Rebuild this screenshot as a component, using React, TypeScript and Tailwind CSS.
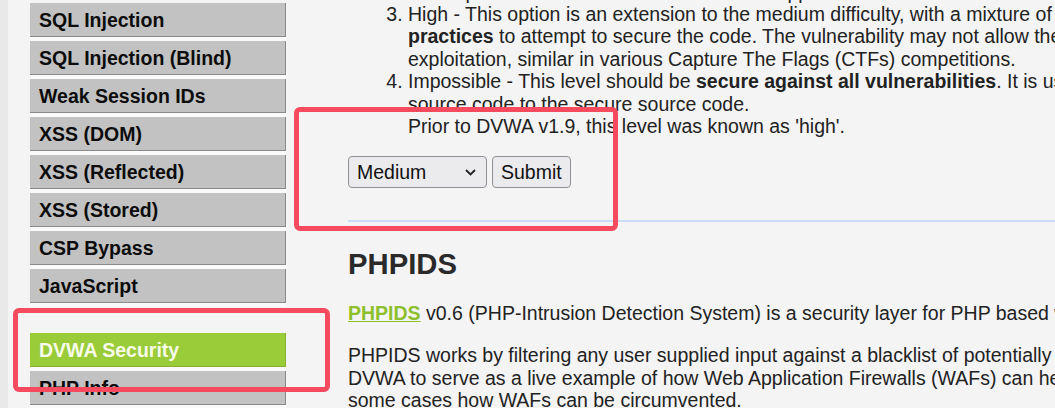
import React from "react";

const menuTop = [
  "SQL Injection",
  "SQL Injection (Blind)",
  "Weak Session IDs",
  "XSS (DOM)",
  "XSS (Reflected)",
  "XSS (Stored)",
  "CSP Bypass",
  "JavaScript",
];

function MenuItem({ label, active }: { label: string; active?: boolean }) {
  return (
    <div className="w-[256px] bg-[#fafafa] pb-[4px]">
      <div
        className={
          active
            ? "flex h-[34px] items-center border-r border-b border-[#86b02f] bg-[#9acb39] pl-[9px] text-[19.5px] font-bold leading-[22px] text-[#f7fbe8]"
            : "flex h-[34px] items-center border-r border-b border-[#8a8a8a] bg-[#c2c2c2] pl-[9px] text-[19.5px] font-bold leading-[22px] text-[#0c0c0c]"
        }
      >
        {label}
      </div>
    </div>
  );
}

export default function App() {
  return (
    <div className="relative flex h-[408px] w-[1055px] overflow-hidden bg-[#f4f4f4] font-['Liberation_Sans',Arial,sans-serif]">
      <div className="w-[8px] shrink-0 bg-[#e9e9e9]" />
      <aside className="w-[300px] shrink-0 pl-[22px] pt-[3px]">
        {menuTop.map((m) => (
          <MenuItem key={m} label={m} />
        ))}
        <div className="h-[26px]" />
        <MenuItem label="DVWA Security" active />
        <MenuItem label="PHP Info" />
      </aside>
      <main className="w-[1400px] shrink-0 pl-[40px] text-[19.5px] leading-[22.4px] text-[#222]">
        <ol start={2} className="-mt-[41.8px] list-decimal pl-[60px]">
          <li className="whitespace-nowrap">
            Medium - This setting is mainly to give an example to the user of <b>bad security practices</b>, where the
            <br />
            developer has tried but failed to secure an application. It also acts as a challenge to users to refine their
          </li>
          <li className="whitespace-nowrap">
            High - This option is an extension to the medium difficulty, with a mixture of <b>harder or alternative bad</b>
            <br />
            <b>practices</b> to attempt to secure the code. The vulnerability may not allow the same extent of the
            <br />
            exploitation, similar in various Capture The Flags (CTFs) competitions.
          </li>
          <li className="whitespace-nowrap">
            Impossible - This level should be <b>secure against all vulnerabilities</b>. It is used to compare the vulnerable
            <br />
            source code to the secure source code.
            <br />
            Prior to DVWA v1.9, this level was known as 'high'.
          </li>
        </ol>
        <form className="mt-[18.6px] flex items-center gap-[5px]">
          <div className="relative h-[32px] w-[139px]">
            <select
              defaultValue="medium"
              className="h-full w-full appearance-none rounded-[4px] border border-[#8f8f96] bg-[#ebebee] pl-[8px] text-[19.5px] text-[#111]"
            >
              <option value="low">Low</option>
              <option value="medium">Medium</option>
              <option value="high">High</option>
              <option value="impossible">Impossible</option>
            </select>
            <svg
              className="pointer-events-none absolute right-[11px] top-[13px]"
              width="11"
              height="7"
              viewBox="0 0 11 7"
              fill="none"
            >
              <path d="M1 1l4.5 4.5L10 1" stroke="#222" strokeWidth="1.8" />
            </svg>
          </div>
          <button
            type="button"
            className="h-[32px] rounded-[4px] border border-[#8f8f96] bg-[#ebebee] px-[8px] text-[19.5px] text-[#111]"
          >
            Submit
          </button>
        </form>
        <div className="mt-[32px] h-[2px] bg-[#cbdcf6]" />
        <h2 className="mt-[25.5px] text-[29.25px] font-bold leading-[33.6px] text-[#2a2a2a]">PHPIDS</h2>
        <p className="mt-[21px] whitespace-nowrap">
          <a className="font-bold text-[#8dc02c] underline">PHPIDS</a> v0.6 (PHP-Intrusion Detection System) is a security layer for PHP based web applications.
        </p>
        <p className="mt-[19.6px] whitespace-nowrap">
          PHPIDS works by filtering any user supplied input against a blacklist of potentially malicious code. It is used in
          <br />
          DVWA to serve as a live example of how Web Application Firewalls (WAFs) can help improve security and in
          <br />
          some cases how WAFs can be circumvented.
        </p>
      </main>

      <div className="pointer-events-none absolute left-[294px] top-[107px] h-[124px] w-[324px] rounded-[6px] border-[5px] border-[#f64a5e]" />
      <div className="pointer-events-none absolute left-[13px] top-[308px] h-[84px] w-[317px] rounded-[6px] border-[5px] border-[#f64a5e]" />
    </div>
  );
}
